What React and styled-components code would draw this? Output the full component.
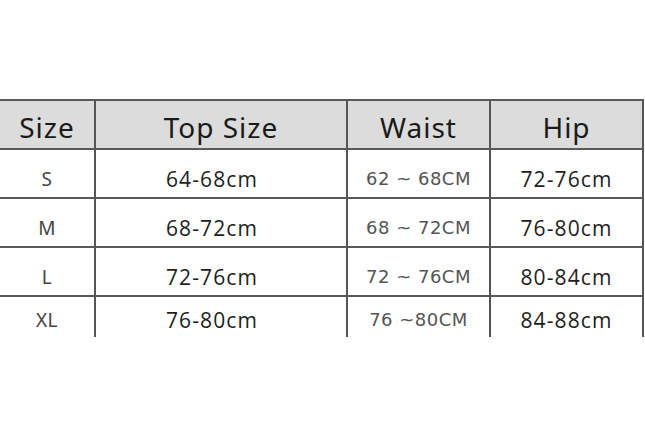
import React from 'react'
import styled, { createGlobalStyle } from 'styled-components'

const Global = createGlobalStyle`
  html, body {
    margin: 0;
    padding: 0;
    background: #fff;
  }
`

const Page = styled.div`
  width: 645px;
  height: 441px;
  padding-top: 99px;
  box-sizing: border-box;
  background: #fff;
`

const Grid = styled.div`
  display: grid;
  grid-template-columns: 96px 252px 143px 153px;
  border-top: 2px solid #5a5a5a;
  width: 644px;
`

const Cell = styled.div`
  display: flex;
  align-items: center;
  justify-content: center;
  box-sizing: border-box;
  height: ${p => (p.$last ? 40 : 49)}px;
  border-right: 2px solid #555;
  border-bottom: ${p => (p.$last ? 'none' : '2px solid #5a5a5a')};
  background: ${p => (p.$head ? '#dcdcdc' : '#fff')};
  padding-top: ${p => (p.$head ? 4 : p.$last ? 5 : 10)}px;
  padding-right: ${p => p.$pull || 0}px;
  color: #222;
`

const Head = styled.span`
  font-family: "Noto Sans", "DejaVu Sans", sans-serif;
  font-size: 28px;
  color: #1a1a1a;
  letter-spacing: 1px;
`

const SizeLabel = styled.span`
  font-family: "Noto Sans", sans-serif;
  font-size: 19px;
  color: #444;
  letter-spacing: 0.5px;
`

const Value = styled.span`
  font-family: "Open Sans", "Noto Sans", sans-serif;
  font-size: 21px;
  color: #1e1e1e;
  letter-spacing: 1.1px;
`

const WaistValue = styled.span`
  font-family: "DejaVu Sans", sans-serif;
  font-size: 18px;
  color: #555;
  letter-spacing: 0.5px;
`

const rows = [
  ['S', '64-68cm', '62 ~ 68CM', '72-76cm'],
  ['M', '68-72cm', '68 ~ 72CM', '76-80cm'],
  ['L', '72-76cm', '72 ~ 76CM', '80-84cm'],
  ['XL', '76-80cm', '76 ~80CM', '84-88cm'],
]

export default function App() {
  return (
    <Page>
      <Global />
      <Grid>
        <Cell $head><Head>Size</Head></Cell>
        <Cell $head><Head>Top Size</Head></Cell>
        <Cell $head><Head>Waist</Head></Cell>
        <Cell $head><Head>Hip</Head></Cell>
        {rows.map((r, i) => {
          const last = i === rows.length - 1
          return (
            <React.Fragment key={r[0]}>
              <Cell $last={last}><SizeLabel>{r[0]}</SizeLabel></Cell>
              <Cell $last={last} $pull={18}><Value>{r[1]}</Value></Cell>
              <Cell $last={last}><WaistValue>{r[2]}</WaistValue></Cell>
              <Cell $last={last}><Value>{r[3]}</Value></Cell>
            </React.Fragment>
          )
        })}
      </Grid>
    </Page>
  )
}
